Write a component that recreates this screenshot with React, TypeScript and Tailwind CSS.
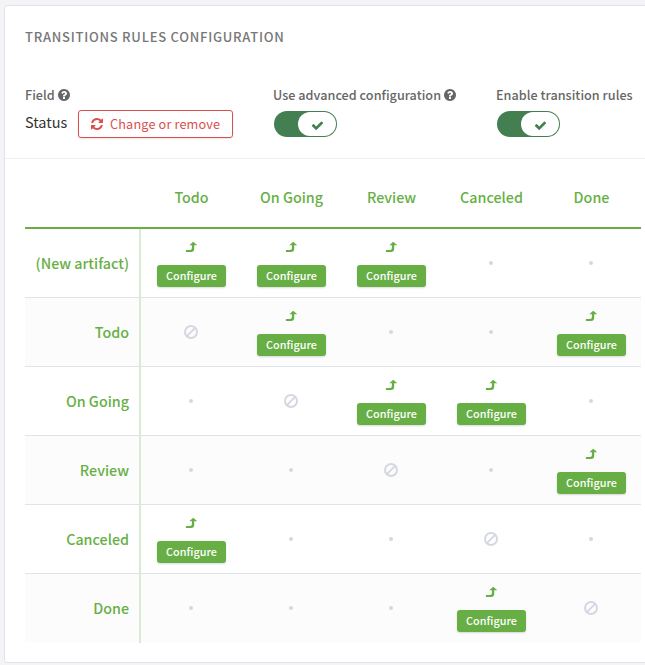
import React from "react";

type Cell = "yes" | "no" | "self";

const states = ["Todo", "On Going", "Review", "Canceled", "Done"];

const rows: { from: string; cells: Cell[] }[] = [
  { from: "(New artifact)", cells: ["yes", "yes", "yes", "no", "no"] },
  { from: "Todo", cells: ["self", "yes", "no", "no", "yes"] },
  { from: "On Going", cells: ["no", "self", "yes", "yes", "no"] },
  { from: "Review", cells: ["no", "no", "self", "no", "yes"] },
  { from: "Canceled", cells: ["yes", "no", "no", "self", "no"] },
  { from: "Done", cells: ["no", "no", "no", "yes", "self"] },
];

function HelpIcon() {
  return (
    <svg className="size-3 fill-current" viewBox="128 128 1536 1536">
      <path d="M1024 1376v-192q0-14-9-23t-23-9h-192q-14 0-23 9t-9 23v192q0 14 9 23t23 9h192q14 0 23-9t9-23zm256-672q0-88-55.5-163t-138.5-116-170-41q-243 0-371 213-15 24 8 42l132 100q7 6 19 6 16 0 25-12 53-68 86-92 34-24 86-24 48 0 85.5 26t37.5 59q0 38-20 61t-68 45q-63 28-115.5 86.5t-52.5 125.5v36q0 14 9 23t23 9h192q14 0 23-9t9-23q0-19 21.5-49.5t54.5-49.5q32-18 49-28.5t46-35 44.5-48 28-60.5 12.5-81zm384 192q0 209-103 385.5t-279.5 279.5-385.5 103-385.5-103-279.5-279.5-103-385.5 103-385.5 279.5-279.5 385.5-103 385.5 103 279.5 279.5 103 385.5z" />
    </svg>
  );
}

function RefreshIcon() {
  return (
    <svg className="size-3 shrink-0 fill-current" viewBox="0 0 1536 1536">
      <path d="M1511 928q0 5-1 7-64 268-268 434.5t-478 166.5q-146 0-282.5-55t-243.5-157l-129 129q-19 19-45 19t-45-19-19-45v-448q0-26 19-45t45-19h448q26 0 45 19t19 45-19 45l-137 137q71 66 161 102t187 36q134 0 250-65t186-179q11-17 53-117 8-23 30-23h192q13 0 22.5 9.5t9.5 22.5zm25-800v448q0 26-19 45t-45 19h-448q-26 0-45-19t-19-45 19-45l138-138q-148-137-349-137-134 0-250 65t-186 179q-11 17-53 117-8 23-30 23h-199q-13 0-22.5-9.5t-9.5-22.5v-7q65-268 270-434.5t480-166.5q146 0 284 55.5t245 156.5l130-129q19-19 45-19t45 19 19 45z" />
    </svg>
  );
}

function Switch() {
  return (
    <div className="ml-px mt-2 flex h-[26px] w-[63px] justify-end rounded-full bg-[#437f51] p-px">
      <div className="flex h-6 w-[38px] items-center justify-center rounded-full bg-white text-[#437f51]">
        <svg className="mt-[3px] size-[13px] fill-current" viewBox="0 0 1792 1792">
          <path d="M1671 566q0 40-28 68l-724 724-136 136q-28 28-68 28t-68-28l-136-136-362-362q-28-28-28-68t28-68l136-136q28-28 68-28t68 28l294 295 656-657q28-28 68-28t68 28l136 136q28 28 28 68z" />
        </svg>
      </div>
    </div>
  );
}

function Property({ label, help, className, children }: { label: string; help?: boolean; className: string; children: React.ReactNode }) {
  return (
    <div className={className}>
      <div className="flex h-4 items-center gap-[3px] whitespace-nowrap text-[12.6px] font-medium tracking-[0.04px] text-[#666]">
        {label}
        {help && <HelpIcon />}
      </div>
      {children}
    </div>
  );
}

function Transition({ kind }: { kind: Cell }) {
  if (kind === "no") {
    return <div className="size-1 rounded-full bg-[#d5d7e2]" />;
  }
  if (kind === "self") {
    return (
      <svg className="size-3.5 stroke-[#d5d7e2]" viewBox="0 0 14 14" fill="none" strokeWidth="2">
        <circle cx="7" cy="7" r="6" />
        <path d="M2.9 11.1 11.1 2.9" />
      </svg>
    );
  }
  return (
    <div className="flex flex-col items-center self-start pt-3">
      <svg className="size-3 overflow-visible fill-[#67af45]" viewBox="0 0 12 12">
        <path d="M0.9 9H5Q6.9 9 6.9 7.2V4.3H4.3L8.2 0.7 12.3 4.3H9.2V7.8Q9.2 11.1 6 11.1H0.9Z" />
      </svg>
      <button className="mt-3 h-[22px] w-[69px] rounded-[3px] bg-[#67af45] pb-[2px] pl-px text-[10.8px] font-medium leading-[20px] tracking-[0.05px] text-white shadow-[0_1px_2px_rgba(0,0,0,0.15)]">
        Configure
      </button>
    </div>
  );
}

export default function App() {
  return (
    <div className="h-[665px] w-[645px] overflow-hidden bg-[#f4f4f6] pl-1 pt-[5px] font-['Noto_Sans_CJK_JP','Noto_Sans',sans-serif]">
      <section className="h-[658px] w-[660px] rounded-[3px] border border-[#e1e3ec] bg-white">
        <h2 className="ml-5 pt-[21px] text-[13px] font-medium leading-5 tracking-[0.75px] text-[#777]">TRANSITIONS RULES CONFIGURATION</h2>
        <div className="mt-[26px] flex h-[86px] border-b border-[#f0f0f2] pl-5 pt-[14px]">
          <Property label="Field" help className="w-[248px]">
            <div className="mt-[7px] flex h-7">
              <span className="w-[53px] text-[14.5px] leading-[23px] text-[#333]">Status</span>
              <button className="flex h-7 w-[155px] items-center gap-[7px] whitespace-nowrap rounded-[3px] border border-[#dc4e4e] pl-3 text-[12.7px] tracking-[0.15px] text-[#dc4e4e] shadow-[0_1px_2px_rgba(0,0,0,0.1)]">
                <RefreshIcon />
                Change or remove
              </button>
            </div>
          </Property>
          <Property label="Use advanced configuration" help className="w-[223px]">
            <Switch />
          </Property>
          <Property label="Enable transition rules" className="w-[150px]">
            <Switch />
          </Property>
        </div>
        <div className="ml-5 w-[616px] text-[14.3px] font-medium text-[#67af45]">
          <div className="grid h-[70px] grid-cols-[116px_repeat(5,100px)] border-b-2 border-[#67af45]">
            <div />
            {states.map((s) => (
              <div key={s} className="pl-px pt-[28px] text-center leading-5">{s}</div>
            ))}
          </div>
          {rows.map((row) => (
            <div
              key={row.from}
              className="grid h-[69px] grid-cols-[116px_repeat(5,100px)] border-b border-[#e1e3ec] last:h-[68px] last:border-b-0 odd:bg-[#fcfcfc] even:bg-white"
            >
              <div className="-mb-px flex items-center justify-end border-r-2 border-[#d9ecd0] pb-px pr-2.5 last:mb-0">{row.from}</div>
              {row.cells.map((kind, j) => (
                <div key={j} className="flex items-center justify-center">
                  <Transition kind={kind} />
                </div>
              ))}
            </div>
          ))}
        </div>
      </section>
    </div>
  );
}
